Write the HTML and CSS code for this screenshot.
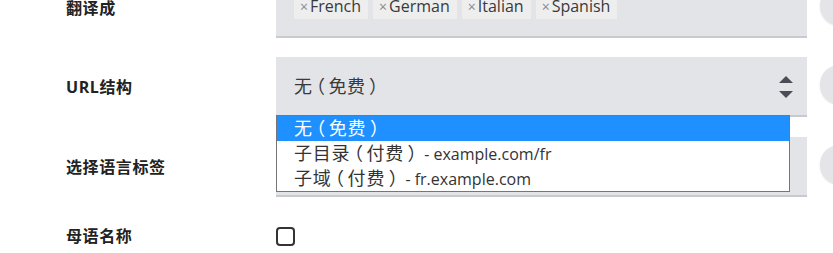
FILE: index.html
```html
<!DOCTYPE html>
<html lang="zh-CN">
<head>
<meta charset="utf-8">
<link rel="stylesheet" href="styles.css">
</head>
<body>
<div class="form">
  <div class="row first">
    <div class="label">翻译成</div>
    <div class="field tags-field">
      <span class="tag"><span class="x">×</span>French</span>
      <span class="tag"><span class="x">×</span>German</span>
      <span class="tag"><span class="x">×</span>Italian</span>
      <span class="tag"><span class="x">×</span>Spanish</span>
    </div>
    <div class="help"></div>
  </div>
  <div class="row">
    <div class="label">URL结构</div>
    <div class="field select-field">
      <span class="value">无<span class="fp">（</span>免费<span class="fp">）</span></span>
      <svg class="arrows" width="14" height="22" viewBox="0 0 14 22">
        <path d="M0 7 L7 0 L14 7 Z" fill="#4a4d55"/>
        <path d="M0 15 L14 15 L7 22 Z" fill="#4a4d55"/>
      </svg>
      <div class="dropdown">
        <div class="opt sel">无<span class="fp">（</span>免费<span class="fp">）</span></div>
        <div class="opt">子目录<span class="fp">（</span>付费<span class="fp">）</span><span class="lat"> - example.com/fr</span></div>
        <div class="opt">子域<span class="fp">（</span>付费<span class="fp">）</span><span class="lat"> - fr.example.com</span></div>
      </div>
    </div>
    <div class="help"></div>
  </div>
  <div class="row">
    <div class="label">选择语言标签</div>
    <div class="field"></div>
    <div class="help"></div>
  </div>
  <div class="row short">
    <div class="label">母语名称</div>
    <div class="checkbox"></div>
  </div>
</div>
</body>
</html>
```
FILE: styles.css
```css
html, body {
  margin: 0;
  padding: 0;
  background: #fff;
  overflow: hidden;
}
body {
  font-family: "Open Sans", "Noto Sans CJK SC", sans-serif;
  color: #333;
}
.form {
  display: flex;
  flex-direction: column;
  gap: 20px;
  margin-top: -22px;
}
.row {
  display: flex;
  align-items: center;
  height: 60px;
}
.row.first {
  margin-bottom: -1px;
}
.row.short {
  height: 38px;
}
.label {
  flex: none;
  width: 210px;
  padding-left: 66px;
  padding-bottom: 3px;
  font-weight: 700;
  font-size: 16px;
  letter-spacing: 0.6px;
  color: #222;
}
.field {
  flex: none;
  position: relative;
  box-sizing: border-box;
  width: 531px;
  height: 60px;
  background: #e3e4e8;
  border-bottom: 2px solid #c9cacd;
  display: flex;
  align-items: center;
  padding-left: 18px;
}
.tags-field {
  align-items: flex-start;
  padding-top: 17px;
  gap: 5px;
}
.tag {
  height: 24px;
  line-height: 23px;
  background: #eeeeef;
  padding: 0 7px 0 6px;
  font-size: 16px;
  color: #3a3a3a;
}
.tag .x {
  color: #8a8a8a;
  font-size: 14px;
  margin-right: 2px;
}
.help {
  flex: none;
  align-self: flex-start;
  margin-top: 8px;
  margin-left: 13px;
  width: 38px;
  height: 38px;
  border-radius: 50%;
  background: #e5e5e9;
  box-shadow: 0 2px 2px rgba(0, 0, 0, 0.12);
}
.fp {
  display: inline-block;
  width: 16px;
  text-align: center;
  font-feature-settings: "halt";
  letter-spacing: 0;
}
.lat {
  font-size: 16px;
  letter-spacing: 0;
}
.select-field .value {
  font-size: 18px;
  letter-spacing: 0.5px;
  color: #3a3a3a;
  padding-bottom: 2px;
}
.arrows {
  position: absolute;
  left: 503px;
  top: 19px;
}
.dropdown {
  position: absolute;
  left: 0;
  top: 58px;
  width: 512px;
  border: 1px solid #767676;
  background: #fff;
  z-index: 2;
}
.opt {
  height: 25px;
  line-height: 24px;
  padding-left: 17px;
  font-size: 18px;
  letter-spacing: 0.8px;
  color: #333;
  white-space: nowrap;
  overflow: hidden;
}
.opt.sel {
  background: #1e90ff;
  color: #fff;
}
.checkbox {
  flex: none;
  box-sizing: border-box;
  width: 19px;
  height: 19px;
  border: 2px solid #333;
  border-radius: 4px;
}
```
